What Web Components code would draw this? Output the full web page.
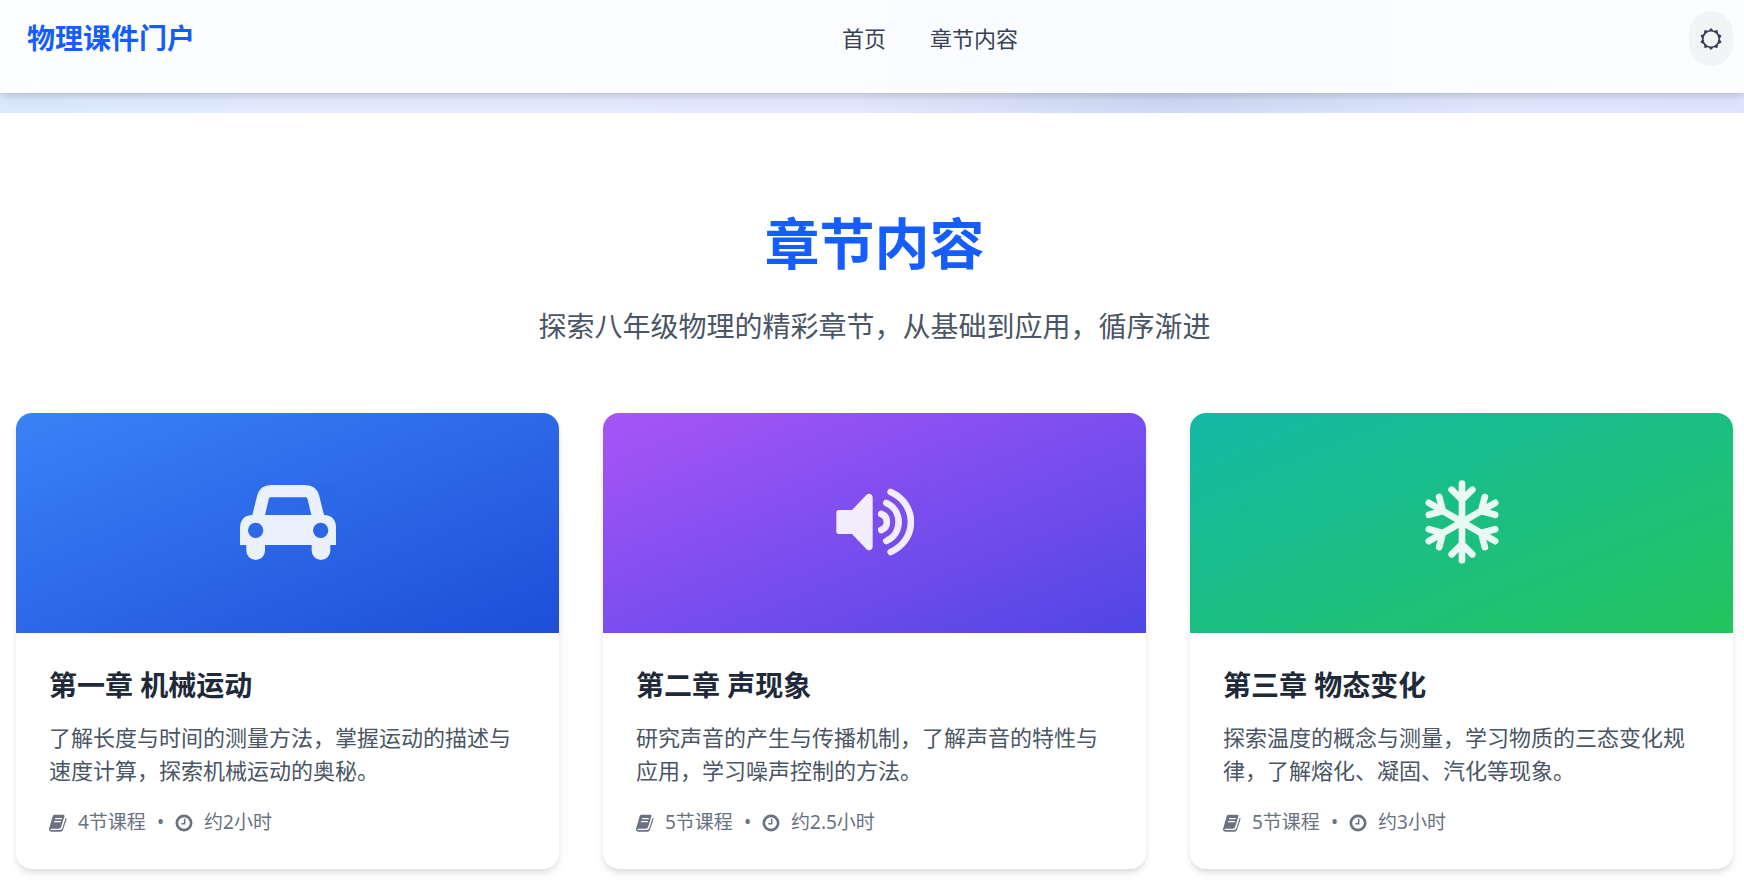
<!DOCTYPE html>
<html lang="zh-CN">
<head>
<meta charset="utf-8">
<meta name="viewport" content="width=device-width, initial-scale=1">
<title>物理课件门户</title>
<style>
  body {
    margin: 0;
    background: #ffffff;
    color: #1e2939;
    font-family: "Noto Sans", "Noto Sans CJK SC", sans-serif;
    font-size: 22px;
    line-height: 33px;
  }
</style>
</head>
<body>

<template id="portal-header">
  <style>
    :host {
      display: block;
      position: relative;
      z-index: 1;
      background: linear-gradient(to right, #fdfeff 0%, #fcfdff 45%, #fafbff 62%, #fafbff 72%, #fcfdff 84%, #fcfdff 100%);
      box-shadow: 0 4px 14px rgba(0, 0, 0, 0.08), 0 2px 6px rgba(0, 0, 0, 0.12);
    }
    header {
      display: flex;
      align-items: center;
      justify-content: space-between;
      padding: 11px 11px 27px 27px;
    }
    .brand {
      color: #155dfc;
      font-size: 28px;
      font-weight: 700;
      text-decoration: none;
    }
    nav {
      display: flex;
      gap: 44px;
      padding-right: 24px;
    }
    button {
      display: flex;
      align-items: center;
      justify-content: center;
      width: 44px;
      height: 55px;
      padding: 0;
      border: 0;
      border-radius: 22px;
      background: #f3f4f6;
      color: #364153;
      cursor: pointer;
    }
    svg {
      width: 22px;
      height: 22px;
      fill: currentColor;
    }
  </style>
  <header>
    <a class="brand" href="#"></a>
    <nav><slot></slot></nav>
    <button type="button" aria-label="切换主题">
      <svg viewBox="-11 -11 22 22" aria-hidden="true">
        <path fill-rule="evenodd" d="M0-11 2.7-8.3 6.5-8.9 7.1-5.2 10.5-3.4 8.8 0 10.5 3.4 7.1 5.2 6.5 8.9 2.7 8.3 0 11-2.7 8.3-6.5 8.9-7.1 5.2-10.5 3.4-8.8 0-10.5-3.4-7.1-5.2-6.5-8.9-2.7-8.3ZM7.4 0A7.4 7.4 0 1 0-7.4 0 7.4 7.4 0 1 0 7.4 0Z"/>
      </svg>
    </button>
  </header>
</template>

<template id="nav-link">
  <style>
    :host { display: block; }
    a {
      color: #364153;
      text-decoration: none;
    }
  </style>
  <a><slot></slot></a>
</template>

<template id="hero-band">
  <style>
    :host {
      display: block;
      height: 20px;
      background:
        radial-gradient(320px 140px at 67% 50%, rgba(160, 180, 220, 0.3), transparent),
        linear-gradient(to right, #dbeafe 0%, #e4eafe 20%, #e3e8fe 50%, #dfe7fe 80%, #e0e5ff 100%);
    }
  </style>
</template>

<template id="chapter-section">
  <style>
    :host {
      display: block;
      padding: 88px 11px 17px 16px;
    }
    h2 {
      margin: 0 0 22px;
      color: #155dfc;
      font-size: 55px;
      line-height: 83px;
      font-weight: 700;
      text-align: center;
    }
    p {
      margin: 0 0 66px;
      color: #4a5565;
      font-size: 28px;
      line-height: 41px;
      text-align: center;
    }
    .grid {
      display: grid;
      grid-template-columns: repeat(3, 1fr);
      gap: 44px;
    }
    @media (max-width: 1000px) {
      .grid { grid-template-columns: 1fr; }
    }
  </style>
  <h2><slot name="title"></slot></h2>
  <p><slot name="lead"></slot></p>
  <div class="grid"><slot></slot></div>
</template>

<template id="chapter-card">
  <style>
    :host {
      display: block;
      border-radius: 16px;
      overflow: hidden;
      background: #ffffff;
      box-shadow: 0 5px 8px -1px rgba(0, 0, 0, 0.1), 0 3px 6px -3px rgba(0, 0, 0, 0.1);
    }
    .cover {
      display: flex;
      align-items: center;
      justify-content: center;
      box-sizing: border-box;
      height: 220px;
      padding-bottom: 2px;
      background: linear-gradient(to bottom right, var(--from), var(--to));
    }
    .body { padding: 33px; }
    h3 {
      margin: 0 0 17px;
      color: #1e2939;
      font-size: 28px;
      line-height: 38px;
      font-weight: 700;
    }
    p {
      margin: 0 0 22px;
      color: #4a5565;
    }
    .meta {
      display: flex;
      align-items: center;
      gap: 11px;
      color: #6a7282;
      font-size: 19px;
      line-height: 27px;
    }
    .meta svg {
      width: 18px;
      height: 18px;
      flex: none;
    }
  </style>
  <div class="cover"><slot name="icon"></slot></div>
  <div class="body">
    <h3><slot name="title"></slot></h3>
    <p><slot></slot></p>
    <div class="meta">
      <svg viewBox="0 0 54 54" aria-hidden="true">
        <path fill="currentColor" fill-rule="evenodd" d="M16 2H43Q48 2 46 8L36 40Q35 44 30 44H7Q3 44 4 46 5 48 9 48H33Q38 48 40 43L50 11Q54 12 52 18L42 47Q40 53 34 53H8Q0 53 0 45L11 7Q12 2 16 2ZM19 12 18 16H38L39 12ZM16 21 15 25H35L36 21Z"/>
      </svg>
      <span class="lessons"></span>
      <span>•</span>
      <svg viewBox="0 0 54 54" aria-hidden="true" fill="none" stroke="currentColor">
        <circle cx="27" cy="27" r="21.5" stroke-width="8"/>
        <path d="M29 14V29H19" stroke-width="4.5"/>
      </svg>
      <span class="duration"></span>
    </div>
  </div>
</template>

<template id="chapter-icon">
  <style>
    :host {
      display: block;
      color: #ffffff;
      opacity: 0.9;
    }
    svg { display: block; }
  </style>
</template>

<portal-header brand="物理课件门户">
  <nav-link href="#home">首页</nav-link>
  <nav-link href="#chapters">章节内容</nav-link>
</portal-header>
<hero-band></hero-band>
<main>
  <chapter-section id="chapters">
    <span slot="title">章节内容</span>
    <span slot="lead">探索八年级物理的精彩章节，从基础到应用，循序渐进</span>

    <chapter-card from="#3b82f6" to="#1d4ed8" lessons="4节课程" duration="约2小时">
      <chapter-icon slot="icon" name="car"></chapter-icon>
      <span slot="title">第一章 机械运动</span>
      了解长度与时间的测量方法，掌握运动的描述与速度计算，探索机械运动的奥秘。
    </chapter-card>

    <chapter-card from="#a855f7" to="#4f46e5" lessons="5节课程" duration="约2.5小时">
      <chapter-icon slot="icon" name="volume"></chapter-icon>
      <span slot="title">第二章 声现象</span>
      研究声音的产生与传播机制，了解声音的特性与应用，学习噪声控制的方法。
    </chapter-card>

    <chapter-card from="#14b8a6" to="#22c55e" lessons="5节课程" duration="约3小时">
      <chapter-icon slot="icon" name="snowflake"></chapter-icon>
      <span slot="title">第三章 物态变化</span>
      探索温度的概念与测量，学习物质的三态变化规律，了解熔化、凝固、汽化等现象。
    </chapter-card>
  </chapter-section>
</main>

<script>
// one arm of the snowflake, turned six times round the centre
const arm = [0, 60, 120, 180, 240, 300]
  .map(deg => `<path d="M0 0V-115M0-66-31-97M0-66 31-97" transform="rotate(${deg})"/>`)
  .join('');

const icons = {
  car: `
    <svg width="96" height="75" viewBox="0 0 288 225" aria-hidden="true">
      <path fill="currentColor" fill-rule="evenodd" d="M37 90 52 30Q61 0 93 0H196Q228 0 237 30L252 90Q288 92 288 128V180H271V197A28 28 0 0 1 215 197V180H75V197A28 28 0 0 1 19 197V180H0V128Q1 92 37 90ZM75 90H214L202 40Q201 37 197 37H92Q88 37 87 40ZM70 136A23 23 0 1 0 24 136 23 23 0 1 0 70 136ZM265 136A23 23 0 1 0 219 136 23 23 0 1 0 265 136Z"/>
    </svg>`,
  volume: `
    <svg width="78" height="68" viewBox="0 0 234 204" aria-hidden="true">
      <path fill="currentColor" d="M9 66H48L91 21Q96 15 103 18 110 21 110 28V176Q110 183 103 186 96 189 91 183L48 138H9Q1 138 1 130V74Q1 66 9 66Z"/>
      <path fill="none" stroke="currentColor" stroke-width="20" stroke-linecap="round" d="M136 78C158 86 158 118 136 126M151 45C200 66 200 138 151 159M164 12C245 48 245 156 164 192"/>
    </svg>`,
  snowflake: `
    <svg width="84" height="84" viewBox="-126 -126 252 252" aria-hidden="true">
      <g fill="none" stroke="currentColor" stroke-width="20" stroke-linecap="round">${arm}</g>
    </svg>`
};

class BaseElement extends HTMLElement {
  constructor() {
    super();
    const template = document.getElementById(this.localName);
    this.attachShadow({ mode: 'open' }).appendChild(template.content.cloneNode(true));
  }

  $(selector) {
    return this.shadowRoot.querySelector(selector);
  }
}

class PortalHeader extends BaseElement {
  connectedCallback() {
    this.$('.brand').textContent = this.getAttribute('brand');
  }
}

class NavLink extends BaseElement {
  connectedCallback() {
    this.$('a').href = this.getAttribute('href');
  }
}

class HeroBand extends BaseElement {}

class ChapterSection extends BaseElement {}

class ChapterCard extends BaseElement {
  connectedCallback() {
    this.style.setProperty('--from', this.getAttribute('from'));
    this.style.setProperty('--to', this.getAttribute('to'));
    this.$('.lessons').textContent = this.getAttribute('lessons');
    this.$('.duration').textContent = this.getAttribute('duration');
  }
}

class ChapterIcon extends BaseElement {
  connectedCallback() {
    this.shadowRoot.innerHTML += icons[this.getAttribute('name')];
  }
}

customElements.define('portal-header', PortalHeader);
customElements.define('nav-link', NavLink);
customElements.define('hero-band', HeroBand);
customElements.define('chapter-section', ChapterSection);
customElements.define('chapter-card', ChapterCard);
customElements.define('chapter-icon', ChapterIcon);
</script>
</body>
</html>
